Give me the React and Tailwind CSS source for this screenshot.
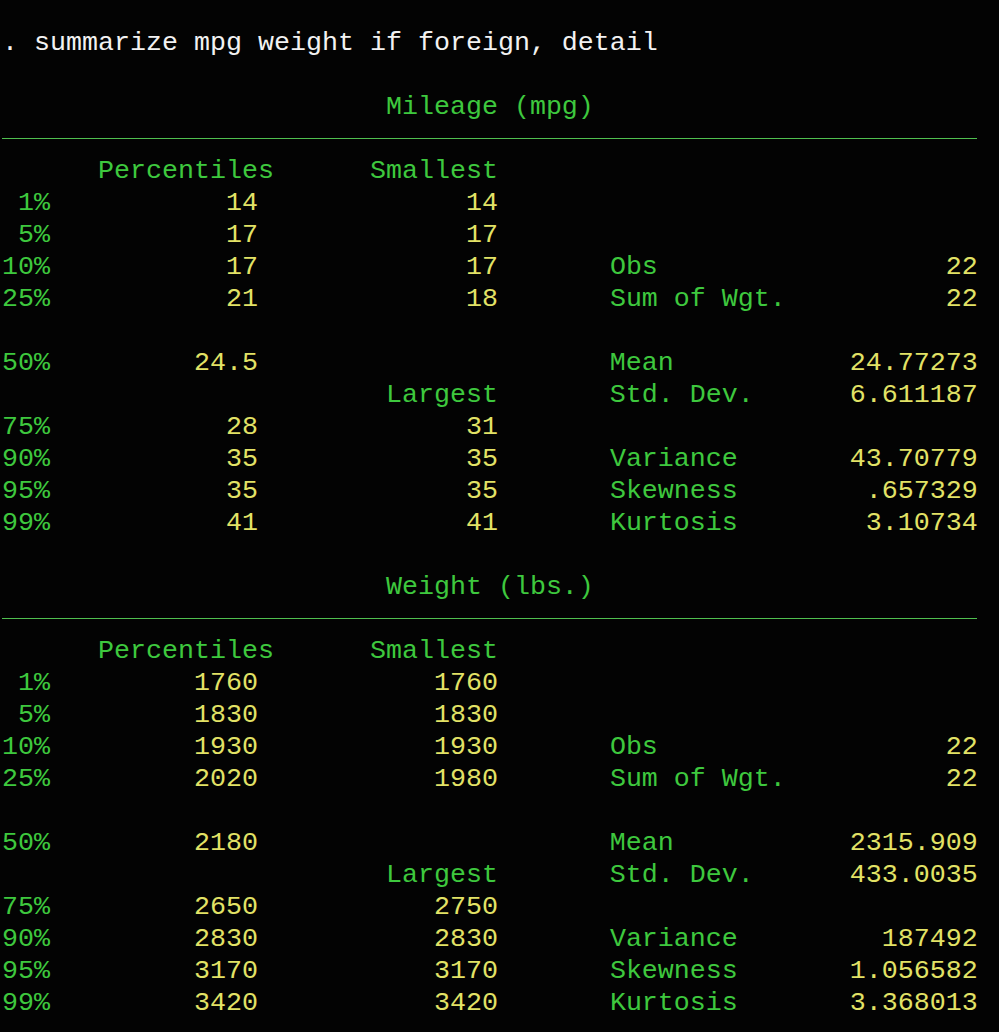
const G = 'text-[#3ec83e]';
const Y = 'text-[#e2e266]';

function pad(s, n) {
  return s.padStart(n, ' ');
}

// one statistics block in Stata's "summarize, detail" layout
function Block({ title, rows, smallest, largest }) {
  const [s1, s5, s10, s25] = smallest;
  const [l75, l90, l95, l99] = largest;
  const [p1, p5, p10, p25, p50, p75, p90, p95, p99] = rows.pct;
  const st = rows.stats;
  const left = (lab, v, w) => (
    <>
      <span className={G}>{lab}</span>
      <span className={Y}>{pad(v, 16 - lab.length)}</span>
      {w !== undefined && <span className={Y}>{pad(w, 15)}</span>}
    </>
  );
  const right = (lab, v, from) => (
    <>
      <span className={G}>{' '.repeat(38 - from) + lab}</span>
      <span className={Y}>{pad(v, 23 - lab.length)}</span>
    </>
  );
  return (
    <>
      <div className={G}>{' '.repeat(24) + title}</div>
      <div className="h-8 pt-[15px]">
        <div className="h-px w-[975px] bg-[#4fbf4f]" />
      </div>
      <div className={G}>{'      Percentiles      Smallest'}</div>
      <div>{left(' 1%', p1, s1)}</div>
      <div>{left(' 5%', p5, s5)}</div>
      <div>{left('10%', p10, s10)}{right('Obs', st.obs, 31)}</div>
      <div>{left('25%', p25, s25)}{right('Sum of Wgt.', st.wgt, 31)}</div>
      <div>&nbsp;</div>
      <div>{left('50%', p50)}{right('Mean', st.mean, 16)}</div>
      <div>
        <span className={G}>{' '.repeat(24) + 'Largest'}</span>
        {right('Std. Dev.', st.sd, 31)}
      </div>
      <div>{left('75%', p75, l75)}</div>
      <div>{left('90%', p90, l90)}{right('Variance', st.vari, 31)}</div>
      <div>{left('95%', p95, l95)}{right('Skewness', st.skew, 31)}</div>
      <div>{left('99%', p99, l99)}{right('Kurtosis', st.kurt, 31)}</div>
    </>
  );
}

export default function App() {
  return (
    <div
      className="min-h-[1032px] w-[999px] overflow-hidden bg-[#030303] pl-[2px] pt-[27px] text-[26.67px] leading-[32px] whitespace-pre"
      style={{ fontFamily: '"Liberation Mono", "Courier New", monospace' }}
    >
      <div className="text-[#f2f2f2]">. summarize mpg weight if foreign, detail</div>
      <div>&nbsp;</div>
      <Block
        title="Mileage (mpg)"
        smallest={['14', '17', '17', '18']}
        largest={['31', '35', '35', '41']}
        rows={{
          pct: ['14', '17', '17', '21', '24.5', '28', '35', '35', '41'],
          stats: {
            obs: '22', wgt: '22', mean: '24.77273', sd: '6.611187',
            vari: '43.70779', skew: '.657329', kurt: '3.10734',
          },
        }}
      />
      <div>&nbsp;</div>
      <Block
        title="Weight (lbs.)"
        smallest={['1760', '1830', '1930', '1980']}
        largest={['2750', '2830', '3170', '3420']}
        rows={{
          pct: ['1760', '1830', '1930', '2020', '2180', '2650', '2830', '3170', '3420'],
          stats: {
            obs: '22', wgt: '22', mean: '2315.909', sd: '433.0035',
            vari: '187492', skew: '1.056582', kurt: '3.368013',
          },
        }}
      />
    </div>
  );
}
